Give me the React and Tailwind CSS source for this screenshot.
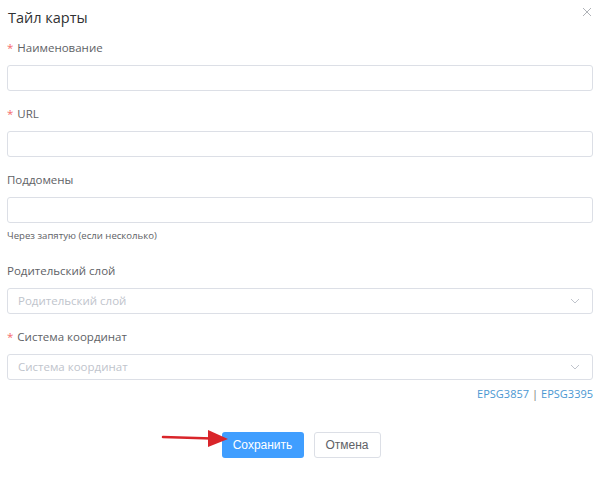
import React from "react";

const Label = ({ required, children }) => (
  <div className="h-4 text-[11.5px] leading-4 text-[#606266] flex items-center">
    {required && <span className="text-[#f56c6c] mr-[4px]">*</span>}
    {children}
  </div>
);

const Input = ({ placeholder }) => (
  <div className="mt-[9px] h-[26px] border border-[#dcdfe6] rounded-[3px] bg-white flex items-center px-[10px] text-[11.5px] text-[#c0c4cc]">
    {placeholder}
  </div>
);

const Select = ({ placeholder }) => (
  <div className="mt-[9px] h-[26px] border border-[#dcdfe6] rounded-[3px] bg-white flex items-center justify-between pl-[10px] pr-[12px] text-[11.5px] text-[#c0c4cc]">
    <span>{placeholder}</span>
    <svg width="10" height="6" viewBox="0 0 10 6" fill="none">
      <path d="M1 1l4 4 4-4" stroke="#c0c4cc" strokeWidth="1" />
    </svg>
  </div>
);

export default function App() {
  return (
    <div className="relative w-[600px] h-[483px] bg-white font-['Open_Sans',sans-serif] px-[7px]">
      <div className="flex items-center justify-between pt-[8px] pl-[1px]">
        <div className="text-[14.5px] leading-5 text-[#303133]">Тайл карты</div>
        <svg width="10" height="10" viewBox="0 0 10 10" className="mr-[1px] -mt-[12px]">
          <path d="M1 1l8 8M9 1l-8 8" stroke="#b0b3b8" strokeWidth="1" />
        </svg>
      </div>

      <div className="mt-[12px]">
        <Label required>Наименование</Label>
        <Input />
      </div>

      <div className="mt-[15px]">
        <Label required>URL</Label>
        <Input />
      </div>

      <div className="mt-[15px]">
        <Label>Поддомены</Label>
        <Input />
        <div className="mt-[6px] text-[9.6px] leading-[14px] text-[#606266]">
          Через запятую (если несколько)
        </div>
      </div>

      <div className="mt-[20px]">
        <Label>Родительский слой</Label>
        <Select placeholder="Родительский слой" />
      </div>

      <div className="mt-[15px]">
        <Label required>Система координат</Label>
        <Select placeholder="Система координат" />
        <div className="mt-[7px] flex justify-end text-[11px] leading-[14px] text-[#4a97d2]">
          <span>EPSG3857</span>
          <span className="mx-[3px] text-[#777]">|</span>
          <span>EPSG3395</span>
        </div>
      </div>

      <div className="mt-[31px] flex justify-center gap-[10px] pl-[2px] font-['Liberation_Sans',sans-serif]">
        <button className="w-[82px] h-[26px] rounded-[3px] bg-[#409eff] text-white text-[12px]">
          Сохранить
        </button>
        <button className="w-[67px] h-[26px] rounded-[3px] border border-[#dcdfe6] bg-white text-[#606266] text-[12px]">
          Отмена
        </button>
      </div>

      <svg className="absolute left-[160px] top-[427px]" width="72" height="22" viewBox="0 0 72 22">
        <path d="M3 10 L52 11.5" stroke="#d9252a" strokeWidth="2.5" strokeLinecap="round" />
        <path d="M48 3 L68 12 L48 20 Z" fill="#d9252a" />
      </svg>
    </div>
  );
}
